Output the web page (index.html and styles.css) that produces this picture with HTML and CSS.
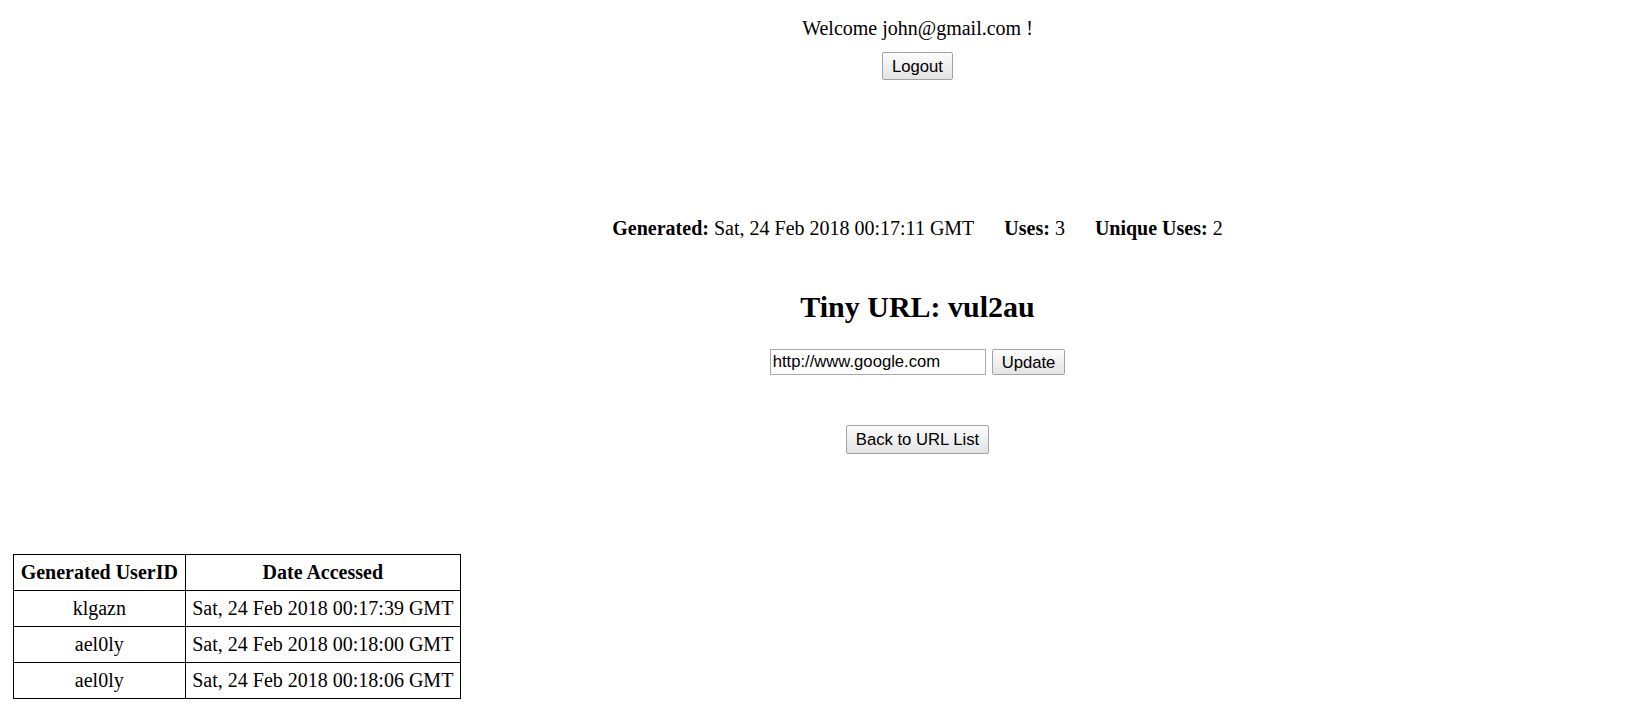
FILE: index.html
```html
<!DOCTYPE html>
<html lang="en">
<head>
<meta charset="utf-8">
<title>Tiny URL: vul2au</title>
<link rel="stylesheet" href="styles.css">
</head>
<body>
<div class="page">
  <div class="center">
    <p class="welcome">Welcome john@gmail.com !</p>
    <button class="btn">Logout</button>
    <div class="stats">
      <span><b>Generated:</b> Sat, 24 Feb 2018 00:17:11 GMT</span>
      <span><b>Uses:</b> 3</span>
      <span><b>Unique Uses:</b> 2</span>
    </div>
    <h2 class="title">Tiny URL: vul2au</h2>
    <form class="update-row">
      <input class="url-input" type="text" value="http://www.google.com">
      <button class="btn btn-update" type="button">Update</button>
    </form>
    <div class="back">
      <button class="btn btn-back">Back to URL List</button>
    </div>
  </div>
  <table class="access">
    <thead>
      <tr><th>Generated UserID</th><th>Date Accessed</th></tr>
    </thead>
    <tbody>
      <tr><td>klgazn</td><td>Sat, 24 Feb 2018 00:17:39 GMT</td></tr>
      <tr><td>ael0ly</td><td>Sat, 24 Feb 2018 00:18:00 GMT</td></tr>
      <tr><td>ael0ly</td><td>Sat, 24 Feb 2018 00:18:06 GMT</td></tr>
    </tbody>
  </table>
</div>
</body>
</html>
```

FILE: styles.css
```css
html, body {
  margin: 0;
  padding: 0;
  background: #ffffff;
}

body {
  font-family: "Liberation Serif", "Times New Roman", serif;
  font-size: 20px;
  color: #000;
}

.page {
  display: flex;
  flex-direction: column;
}

.center {
  padding-left: 183px;
  display: flex;
  flex-direction: column;
  align-items: center;
}

.welcome {
  margin: 0;
  padding-top: 17px;
  line-height: 23px;
}

.btn {
  font-family: "Liberation Sans", Arial, sans-serif;
  font-size: 16.67px;
  line-height: 19px;
  height: 28px;
  box-sizing: border-box;
  padding: 0 9px;
  color: #000;
  background: linear-gradient(#fcfcfc, #e3e3e3);
  border: 1px solid #a3a3a3;
  border-radius: 2px;
}

.center > .btn {
  margin-top: 12px;
}

.stats {
  margin-top: 137px;
  line-height: 23px;
  display: flex;
  gap: 30px;
}

.title {
  margin: 50px 0 0;
  font-size: 30px;
  line-height: 34px;
  font-weight: bold;
}

.update-row {
  margin: 25px 0 0;
  display: flex;
  align-items: center;
  gap: 6px;
}

.url-input {
  width: 216px;
  height: 26px;
  box-sizing: border-box;
  padding: 1px 2px;
  border: 1px solid #a9a9a9;
  font-family: "Liberation Sans", Arial, sans-serif;
  font-size: 16.67px;
  color: #000;
}

.btn-update {
  height: 26px;
}

.back {
  margin-top: 50px;
}

.back .btn {
  height: 29px;
}

.access {
  margin: 100px 0 0 13px;
  align-self: flex-start;
  border-collapse: collapse;
  border: 1px solid #000;
}

.access th,
.access td {
  border: 1px solid #000;
  padding: 6px 6.7px;
  line-height: 23px;
  text-align: center;
}

.access th {
  font-weight: bold;
}
```
